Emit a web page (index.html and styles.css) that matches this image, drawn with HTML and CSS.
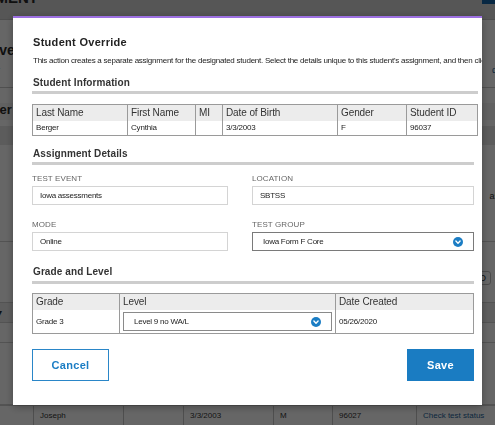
FILE: index.html
```html
<!DOCTYPE html>
<html>
<head>
<meta charset="utf-8">
<link rel="stylesheet" href="styles.css">
</head>
<body>
<div class="bg">
  <div class="bg-head"><span class="bg-head-title">ASSIGNMENT</span><span class="bg-head-btn"></span></div>
  <div class="bg-intro">
    <div class="bg-h">Approve</div>
    <div class="bg-p"><span class="bg-left">Select your</span><span class="bg-link">details for</span></div>
  </div>
  <div class="bg-sec"><div class="bg-h2">Learner</div></div>
  <div class="bg-thead"></div>
  <div class="bg-row r1"><span class="bg-right">assignm</span></div>
  <div class="bg-row r2"><span class="bg-right">ID</span></div>
  <div class="bg-row r3 band"><span class="bg-caret">▾</span></div>
  <div class="bg-row r4"></div>
  <div class="bg-row r5"></div>
  <div class="bg-last">
    <span class="c c0"></span>
    <span class="c c1">Joseph</span>
    <span class="c c2"></span>
    <span class="c c3">3/3/2003</span>
    <span class="c c4">M</span>
    <span class="c c5">96027</span>
    <span class="c c6 lnk">Check test status</span>
  </div>
</div>
<div class="overlay"></div>

<div class="modal">
  <h1 class="title">Student Override</h1>
  <p class="desc">This action creates a separate assignment for the designated student. Select the details unique to this student's assignment, and then click Save.</p>

  <div class="section wide">
    <h2 class="sec-title">Student Information</h2>
    <table class="grid info">
      <colgroup><col style="width:95px"><col style="width:68px"><col style="width:27px"><col style="width:115px"><col style="width:69px"><col></colgroup>
      <tr class="head"><th>Last Name</th><th>First Name</th><th>MI</th><th>Date of Birth</th><th>Gender</th><th>Student ID</th></tr>
      <tr class="body"><td>Berger</td><td>Cynthia</td><td></td><td>3/3/2003</td><td>F</td><td>96037</td></tr>
    </table>
  </div>

  <div class="section">
    <h2 class="sec-title">Assignment Details</h2>
    <div class="fields">
      <div class="field">
        <div class="label">TEST EVENT</div>
        <div class="input">Iowa assessments</div>
      </div>
      <div class="field">
        <div class="label">LOCATION</div>
        <div class="input">SBTSS</div>
      </div>
      <div class="field">
        <div class="label">MODE</div>
        <div class="input">Online</div>
      </div>
      <div class="field">
        <div class="label">TEST GROUP</div>
        <div class="select"><span>Iowa Form F Core</span>
          <svg class="chev" width="10" height="10" viewBox="0 0 10 10"><circle cx="5" cy="5" r="5" fill="#1b7dc4"/><path d="M2.9 4.1 L5 6.2 L7.1 4.1" stroke="#fff" stroke-width="1.4" fill="none" stroke-linecap="round" stroke-linejoin="round"/></svg>
        </div>
      </div>
    </div>
  </div>

  <div class="section">
    <h2 class="sec-title gl">Grade and Level</h2>
    <table class="grid level">
      <colgroup><col style="width:87px"><col style="width:216px"><col></colgroup>
      <tr class="head"><th>Grade</th><th>Level</th><th>Date Created</th></tr>
      <tr class="body tall"><td>Grade 3</td><td class="selcell"><div class="select small"><span>Level 9 no WA/L</span>
        <svg class="chev" width="10" height="10" viewBox="0 0 10 10"><circle cx="5" cy="5" r="5" fill="#1b7dc4"/><path d="M2.9 4.1 L5 6.2 L7.1 4.1" stroke="#fff" stroke-width="1.4" fill="none" stroke-linecap="round" stroke-linejoin="round"/></svg>
      </div></td><td>05/26/2020</td></tr>
    </table>
  </div>

  <div class="actions">
    <button class="btn cancel">Cancel</button>
    <button class="btn save">Save</button>
  </div>
</div>
</body>
</html>
```
FILE: styles.css
```css
html, body {
  margin: 0;
  padding: 0;
  width: 495px;
  height: 425px;
  overflow: hidden;
  font-family: "Liberation Sans", Arial, sans-serif;
  background: #fff;
}

/* ---------- background page ---------- */
.bg {
  width: 495px;
  height: 425px;
  overflow: hidden;
  color: #2a2a2a;
}
.bg-head {
  height: 20px;
  background: #d6d6d6;
  border-bottom: 1px solid #c4c4c4;
  box-sizing: border-box;
  display: flex;
  justify-content: space-between;
  align-items: flex-start;
  overflow: hidden;
}
.bg-head-title {
  font-weight: bold;
  font-size: 15px;
  line-height: 15px;
  margin-top: -10px;
  margin-left: -62px;
}
.bg-head-btn {
  width: 13px;
  height: 4px;
  background: #1565a8;
}
.bg-intro {
  height: 68px;
  border-bottom: 1px solid #c8c8c8;
  box-sizing: border-box;
  padding-top: 22px;
}
.bg-h {
  font-weight: bold;
  font-size: 14px;
  line-height: 16px;
  margin-left: -42px;
}
.bg-p {
  display: flex;
  justify-content: space-between;
  font-size: 9px;
  line-height: 12px;
  margin-top: 6px;
}
.bg-left { margin-left: -45px; }
.bg-link { color: #1a5f9a; margin-right: -36px; }
.bg-sec {
  height: 38px;
  box-sizing: border-box;
  padding-top: 14px;
  background: linear-gradient(to bottom, #fff 15px, #f3f3f3 15px, #f3f3f3 32px, #fff 32px);
}
.bg-h2 {
  font-weight: bold;
  font-size: 13px;
  line-height: 15px;
  margin-left: -36px;
}
.bg-thead {
  height: 19px;
  background: #e6e6e6;
}
.bg-row {
  border-bottom: 1px solid #cfcfcf;
  box-sizing: border-box;
  display: flex;
  justify-content: space-between;
  align-items: center;
  font-size: 9px;
}
.bg-row.r1 { height: 97px; align-items: flex-end; padding-bottom: 40px; }
.bg-row.r2 { height: 61px; align-items: flex-start; padding-top: 29px; }
.bg-row.r3 { height: 20px; }
.bg-row.r4 { height: 20px; }
.bg-row.r5 { height: 62px; }
.band { background: #ececec; }
.bg-right { margin-left: auto; margin-right: -28px; }
.bg-row.r2 .bg-right {
  margin-right: 4px;
  border: 1px solid #bbb;
  border-radius: 3px;
  padding: 1px 4px;
}
.bg-caret { font-size: 10px; margin-left: -3px; }
.bg-last {
  height: 20px;
  display: grid;
  grid-template-columns: 33px 90px 60px 90px 59px 84px 1fr;
  font-size: 8px;
  line-height: 20px;
  border-top: 1px solid #ccc;
  box-sizing: border-box;
  color: #333;
}
.bg-last .c {
  border-left: 1px solid #c4c4c4;
  padding-left: 6px;
  white-space: nowrap;
  overflow: hidden;
}
.bg-last .c0 { border-left: none; }
.bg-last .lnk { color: #1a5f9a; }

.overlay {
  position: fixed;
  inset: 0;
  background: rgba(0, 0, 0, 0.6);
}

/* ---------- modal ---------- */
.modal {
  position: fixed;
  left: 13px;
  top: 16px;
  width: 469px;
  height: 389px;
  box-sizing: border-box;
  background: #fff;
  border-top: 2px solid #9d70e2;
  padding: 0 8px 0 19px;
  overflow: hidden;
  color: #333;
  box-shadow: 0 2px 8px rgba(0, 0, 0, 0.3);
}
.title {
  margin: 16px 0 0 1px;
  font-size: 11px;
  line-height: 16px;
  font-weight: bold;
  color: #222;
  letter-spacing: 0.3px;
}
.desc {
  margin: 6px 0 0 1px;
  font-size: 8px;
  line-height: 10px;
  white-space: nowrap;
  color: #222;
  letter-spacing: -0.25px;
}
.section.wide { margin-right: -4px; }
.sec-title {
  margin: 10px 0 0 0;
  font-size: 10px;
  line-height: 14px;
  font-weight: bold;
  color: #333;
  padding: 0 0 1px 1px;
  border-bottom: 3px solid #cdcdcd;
  letter-spacing: 0.1px;
}
.section:nth-of-type(2) .sec-title { margin-top: 11px; padding-bottom: 1px; }
.sec-title.gl { margin-top: 14px; padding-bottom: 2px; }

.grid {
  width: 100%;
  border-collapse: collapse;
  table-layout: fixed;
  border: 1px solid #9a9a9a;
  margin-top: 10px;
}
.grid th, .grid td {
  border-left: 1px solid #9a9a9a;
  text-align: left;
  padding: 0 0 0 3px;
  white-space: nowrap;
  overflow: hidden;
}
.grid th:first-child, .grid td:first-child { border-left: none; }
.grid .head th {
  background: #ececec;
  font-weight: normal;
  font-size: 10px;
  height: 16px;
  line-height: 16px;
  color: #333;
  letter-spacing: -0.1px;
}
.grid .body td {
  font-size: 8px;
  height: 14px;
  line-height: 14px;
  color: #222;
  letter-spacing: -0.2px;
}
.grid.level { margin-top: 9px; }
.grid .body.tall td { height: 23px; }
.grid td.selcell { padding: 0 3px; }

.fields {
  display: grid;
  grid-template-columns: 196px 222px;
  column-gap: 24px;
  row-gap: 15px;
  margin-top: 9px;
}
.label {
  font-size: 8px;
  line-height: 10px;
  color: #666;
  letter-spacing: 0.1px;
  margin-bottom: 2px;
}
.input, .select {
  height: 19px;
  box-sizing: border-box;
  border: 1px solid #d4d4d4;
  font-size: 8px;
  color: #222;
  display: flex;
  align-items: center;
  padding-left: 7px;
  letter-spacing: -0.25px;
}
.select {
  border-color: #7a7a7a;
  padding-left: 10px;
  padding-right: 10px;
  justify-content: space-between;
}
.select.small { height: 19px; border-color: #8a8a8a; }
.chev { display: block; }

.actions {
  display: flex;
  justify-content: space-between;
  margin-top: 15px;
}
.btn {
  height: 32px;
  box-sizing: border-box;
  font-family: "Liberation Sans", Arial, sans-serif;
  font-size: 11px;
  font-weight: bold;
  letter-spacing: 0.3px;
  cursor: pointer;
}
.btn.cancel {
  width: 77px;
  background: #fff;
  color: #1b7dc4;
  border: 1px solid #2a86c8;
}
.btn.save {
  width: 67px;
  background: #1a7cc2;
  color: #fff;
  border: none;
}
```
